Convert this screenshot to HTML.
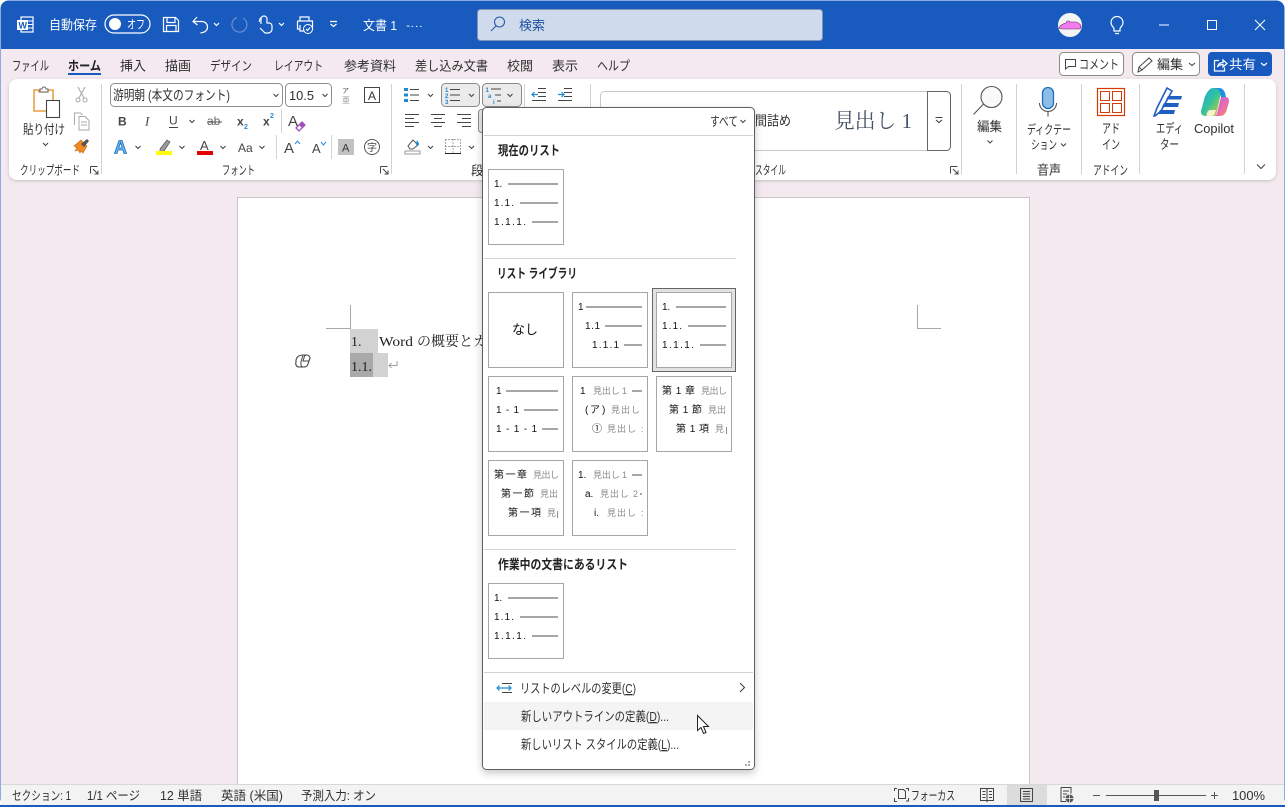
<!DOCTYPE html>
<html lang="ja"><head><meta charset="utf-8"><title>文書 1 - Word</title>
<style>
html,body{margin:0;padding:0;width:1285px;height:807px;overflow:hidden;background:#fff}
svg{display:block;position:absolute;left:0;top:0}
text{font-family:"Liberation Sans","Noto Sans CJK JP",sans-serif;font-size:13px;fill:#303030;white-space:pre}
.w{fill:#fff}
.s{font-size:12.5px}
.b{font-weight:700;fill:#222}
.tn{font-size:10px;fill:#111}
.tg{font-size:9px;fill:#8a8a8a}
.ser{font-family:"Liberation Serif","Noto Serif CJK JP",serif;font-size:14px;fill:#222}
.c{fill:none;stroke:#444;stroke-width:1.1}
.i{fill:none;stroke:#444;stroke-width:1}
.iw{fill:none;stroke:#fff;stroke-width:1.2}
.sep{stroke:#d2d2d2;stroke-width:1}
.l{stroke:#a6a6a6;stroke-width:2}
.tile{fill:#fff;stroke:#a6a6a6;stroke-width:1}
</style></head><body>
<svg width="1285" height="807" viewBox="0 0 1285 807" xmlns="http://www.w3.org/2000/svg">
<defs>
<filter id="sh" x="-10%" y="-10%" width="120%" height="120%"><feDropShadow dx="0" dy="3" stdDeviation="4" flood-color="#000" flood-opacity=".22"/></filter>
<filter id="sh2" x="-2%" y="-10%" width="104%" height="120%"><feDropShadow dx="0" dy="1" stdDeviation="1.5" flood-color="#000" flood-opacity=".18"/></filter>
<linearGradient id="cp1" x1="0" y1="0" x2="1" y2="1"><stop offset="0" stop-color="#1fa4e8"/><stop offset=".5" stop-color="#35c39a"/><stop offset="1" stop-color="#f5c518"/></linearGradient>
<linearGradient id="cp2" x1="0" y1="0" x2="1" y2="1"><stop offset="0" stop-color="#b05fe0"/><stop offset=".6" stop-color="#e86db0"/><stop offset="1" stop-color="#f59a3c"/></linearGradient>
</defs>

<!-- window -->
<rect x="0.5" y="0.5" width="1284" height="806" rx="8" fill="#185abd"/>
<rect x="1" y="49" width="1283" height="736" fill="#f3e9ef"/>

<!-- title bar -->
<g>
<rect x="21" y="17" width="12" height="15" fill="none" stroke="#fff" stroke-width="1.2"/>
<path d="M26 21h7M26 24.500h7M26 28h7" stroke="#fff"/>
<rect x="17" y="20" width="11" height="10" fill="#fff"/>
<text x="18.500" y="28.500" style="font-size:9px;font-weight:700;fill:#185abd">W</text>
<text class="w" x="49" y="29.500" textLength="48" lengthAdjust="spacingAndGlyphs">自動保存</text>
<rect x="105" y="15" width="45" height="18" rx="9" fill="none" stroke="#fff" stroke-width="1.2"/>
<circle cx="115" cy="24" r="6" fill="#fff"/>
<text class="w" x="127" y="28.500" textLength="18" lengthAdjust="spacingAndGlyphs" style="font-size:12px">オフ</text>
<path class="iw" d="M163.500 17.500h12l3 3v11h-15zM167 17.500v5h8v-5M166.500 31.500v-6h9.500v6"/>
<path class="iw" d="M197 17l-4 4.500 4.500 3.500M193.500 21.500h8a5.500 5.500 0 0 1 1 11l-2 .5"/>
<path d="M214 23l2.500 2.500 2.500-2.500" class="iw"/>
<path d="M243 18a7.500 7.500 0 1 1-6-.5" fill="none" stroke="#6a8fd0" stroke-width="1.2"/>
<path class="iw" d="M261 24v-5a3 3 0 0 1 6 0v4h2a3 3 0 0 1 3 3v3a4 4 0 0 1-4 4h-3l-5-5M262 17a5 5 0 0 0-2.500 5"/>
<path d="M279 23l2.500 2.500 2.500-2.500" class="iw"/>
<path class="iw" d="M300 21v-4h9v4M297.500 21h15v8h-3M300.500 29h-3v-8M300 25v6h5"/>
<circle cx="308" cy="29" r="4.500" fill="#185abd" stroke="#fff"/>
<path d="M306 29l1.500 1.500 2.500-3" class="iw"/>
<path class="iw" d="M330 21.500h7M330.500 24l3 2.500 3-2.500"/>
<text class="w" x="363" y="30" textLength="34" lengthAdjust="spacingAndGlyphs">文書 1</text>
<text class="w" x="406" y="29" textLength="17" lengthAdjust="spacingAndGlyphs" style="font-size:10px">-···</text>
<rect x="477.500" y="9.500" width="345" height="31" rx="3" fill="#cfdbec" stroke="#8196b6"/>
<circle cx="499.500" cy="22" r="5" fill="none" stroke="#2a5aa8" stroke-width="1.100"/>
<path d="M496 26l-5 5" stroke="#2a5aa8" stroke-width="1.100"/>
<text x="519" y="30" style="fill:#1e4f9e" textLength="26" lengthAdjust="spacingAndGlyphs">検索</text>
<circle cx="1070" cy="25" r="12" fill="#f4f6f4"/>
<path d="M1059 28c1-3 6-5 7-5l1-2h2l1 1h6c3 1 5 3 5 5l-1 2h-18z" fill="#f07cf0" stroke="#702070" stroke-width=".6"/>
<path class="iw" d="M1114 31v-2.500c-1-2-3-3-3-6a6 6 0 0 1 12 0c0 3-2 4-3 6v2.500zM1115 33.500h4"/>
<path d="M1159 25h10" stroke="#fff"/>
<rect x="1207.500" y="20.500" width="9" height="9" fill="none" stroke="#fff"/>
<path d="M1255 20l10 10M1265 20l-10 10" stroke="#fff"/>
</g>

<!-- tabs -->
<g>
<text x="12" y="70.500" textLength="37" lengthAdjust="spacingAndGlyphs">ファイル</text>
<text x="68" y="70.500" class="b" textLength="33" lengthAdjust="spacingAndGlyphs">ホーム</text>
<rect x="68" y="73" width="33" height="2" fill="#185abd"/>
<text x="120" y="70.500" textLength="26" lengthAdjust="spacingAndGlyphs">挿入</text>
<text x="165" y="70.500" textLength="26" lengthAdjust="spacingAndGlyphs">描画</text>
<text x="210" y="70.500" textLength="42" lengthAdjust="spacingAndGlyphs">デザイン</text>
<text x="274" y="70.500" textLength="49" lengthAdjust="spacingAndGlyphs">レイアウト</text>
<text x="344" y="70.500" textLength="52" lengthAdjust="spacingAndGlyphs">参考資料</text>
<text x="415" y="70.500" textLength="73" lengthAdjust="spacingAndGlyphs">差し込み文書</text>
<text x="507" y="70.500" textLength="26" lengthAdjust="spacingAndGlyphs">校閲</text>
<text x="552" y="70.500" textLength="26" lengthAdjust="spacingAndGlyphs">表示</text>
<text x="597" y="70.500" textLength="33" lengthAdjust="spacingAndGlyphs">ヘルプ</text>

<rect x="1059.500" y="52.500" width="64" height="23" rx="4" fill="#fff" stroke="#8a8a8a"/>
<path class="i" d="M1065.500 59.500h10v7h-7l-3 2.500z"/>
<text x="1079" y="69" textLength="40" lengthAdjust="spacingAndGlyphs">コメント</text>
<rect x="1132.500" y="52.500" width="67" height="23" rx="4" fill="#fff" stroke="#8a8a8a"/>
<path class="i" d="M1138 72l1-5 10-9 3 3-10 9zM1139 67l3 3"/>
<text x="1157" y="69" textLength="26" lengthAdjust="spacingAndGlyphs">編集</text>
<path class="c" d="M1189 63l3 2.500 3-2.500"/>
<rect x="1208" y="52" width="64" height="24" rx="4" fill="#185abd"/>
<path class="iw" d="M1219 60.500h-4.500v10.500h10v-3.500M1217.500 67c.5-3 2.500-4.500 5.500-4.500v-2.500l4 3.500-4 3.500v-2.500c-2.500 0-4 .5-5.500 2.500z"/>
<text class="w" x="1229" y="69" textLength="27" lengthAdjust="spacingAndGlyphs">共有</text>
<path class="iw" d="M1261 63l3 2.500 3-2.500"/>
</g>

<!-- ribbon -->
<rect x="9" y="79" width="1267" height="101" rx="8" fill="#fff" filter="url(#sh2)"/>
<path class="sep" d="M101.500 84v90M391.500 84v90M590.500 84v90M961.500 84v90M1016.500 84v90M1081.500 84v90M1139.500 84v90M1244.500 84v90M524.500 84v24M281.500 109v24M276.500 135v24M331.500 135v24"/>

<!-- clipboard -->
<path d="M34 90h5v2h9v-2h5v21H34z" fill="#fff" stroke="#e08a1e" stroke-width="1.300"/>
<path d="M40 92v-3h2a2 2 0 0 1 4 0h2v3z" fill="#fff" stroke="#666"/>
<rect x="46.500" y="100.500" width="13" height="17" fill="#fff" stroke="#444" stroke-width="1.100"/>
<text x="23" y="134" textLength="42" lengthAdjust="spacingAndGlyphs">貼り付け</text>
<path class="c" d="M43 143l2.500 2.500 2.500-2.500"/>
<path d="M78 87l6 11M85 87l-6 11" stroke="#a8a8a8" stroke-width="1.100"/>
<circle cx="78" cy="100" r="2" fill="none" stroke="#a8a8a8"/><circle cx="85" cy="100" r="2" fill="none" stroke="#a8a8a8"/>
<path d="M74.500 125v-12h6l2 2M79 116.500h6l4 4v9.500H79zM81 122h6M81 125h6" fill="#fff" stroke="#a8a8a8"/>
<path d="M74 146l7-6 6 6-4 7-2-2-1 2-2-3-3 1 2-3z" fill="#f08a24" stroke="#c96a10" stroke-width=".6"/>
<path d="M81 144l6-5 2 2-5 6z" fill="#555"/>
<text x="20" y="174.500" class="s" textLength="60" lengthAdjust="spacingAndGlyphs">クリップボード</text>
<path class="i" d="M90.500 166.500h7M90.500 166.500v7M98 174l-5-5M98 170.500v3.500h-3.500"/>

<!-- font -->
<rect x="110.500" y="83.500" width="172" height="23" rx="4" fill="#fff" stroke="#8f8f8f"/>
<text x="113" y="100" textLength="117" lengthAdjust="spacingAndGlyphs" style="font-size:13.5px">游明朝 (本文のフォント)</text>
<path class="c" d="M273.500 94l2.500 2.500 2.500-2.500"/>
<rect x="285.500" y="83.500" width="46" height="23" rx="4" fill="#fff" stroke="#8f8f8f"/>
<text x="289" y="100" textLength="25" lengthAdjust="spacingAndGlyphs">10.5</text>
<path class="c" d="M322.500 94l2.500 2.500 2.500-2.500"/>
<text x="342" y="93" style="font-size:7px;fill:#555">ア</text>
<text x="342" y="103" style="font-size:8px;fill:#999">亜</text>
<rect x="364.500" y="87.500" width="15" height="15" fill="none" stroke="#444"/>
<text x="368" y="100" style="font-size:12px;fill:#333">A</text>
<text x="118" y="125.500" style="font-size:12px;font-weight:700;fill:#444">B</text>
<text x="145" y="125.500" style="font-family:'Liberation Serif',serif;font-style:italic;font-size:13px;fill:#444">I</text>
<text x="169" y="124.500" style="font-size:12px;fill:#444">U</text>
<path d="M169 127.500h9" stroke="#444"/>
<path class="c" d="M189.500 120l2.500 2.500 2.500-2.500"/>
<text x="207" y="125" style="font-size:12px;fill:#666">ab</text>
<path d="M207 122h15" stroke="#555"/>
<text x="237" y="125.500" style="font-size:12px;font-weight:700;fill:#444">x</text>
<text x="244" y="129" style="font-size:7px;font-weight:700;fill:#2b88d8">2</text>
<text x="263" y="125.500" style="font-size:12px;font-weight:700;fill:#444">x</text>
<text x="270" y="118" style="font-size:7px;font-weight:700;fill:#2b88d8">2</text>
<text x="288" y="126" style="font-size:15px;fill:#444">A</text>
<path d="M296 128l6-6 3 3-6 6z" fill="#fff" stroke="#a04fc0" stroke-width="1.300"/>
<path d="M299 125l3-3 3 3-3 3z" fill="#a04fc0"/>
<text x="114" y="153.500" style="font-size:18px;font-weight:700;fill:#6fb6ee;stroke:#1a6cc0;stroke-width:.8">A</text>
<path class="c" d="M135.500 146l2.500 2.500 2.500-2.500"/>
<path d="M160 149l7-9 3 2-6 9-4 1z" fill="#999" stroke="#555" stroke-width=".7"/>
<rect x="156" y="151" width="16" height="4" fill="#ffff00"/>
<path class="c" d="M179.500 146l2.500 2.500 2.500-2.500"/>
<text x="200" y="150" style="font-size:13px;fill:#444">A</text>
<rect x="197" y="151" width="16" height="4" fill="#e40000"/>
<path class="c" d="M220.500 146l2.500 2.500 2.500-2.500"/>
<text x="238" y="152" style="font-size:12px;fill:#444">Aa</text>
<path class="c" d="M259.500 146l2.500 2.500 2.500-2.500"/>
<text x="284" y="153" style="font-size:15px;fill:#444">A</text>
<path d="M295 144l2.500-3 2.500 3" fill="none" stroke="#2b88d8"/>
<text x="312" y="153" style="font-size:13px;fill:#444">A</text>
<path d="M321 142l2.500 3 2.500-3" fill="none" stroke="#2b88d8"/>
<rect x="338" y="139" width="16" height="16" fill="#c2c2c2"/>
<text x="342" y="151.500" style="font-size:11px;fill:#333">A</text>
<circle cx="372" cy="147" r="7.500" fill="none" stroke="#555"/>
<text x="367" y="151" style="font-size:10px;fill:#444">字</text>
<text x="222" y="174.500" class="s" textLength="33" lengthAdjust="spacingAndGlyphs">フォント</text>
<path class="i" d="M380.500 166.500h7M380.500 166.500v7M388 174l-5-5M388 170.500v3.500h-3.500"/>

<!-- paragraph -->
<path d="M404 88h4v3h-4zM404 93.500h4v3h-4zM404 99h4v3h-4z" fill="#1e88d2"/>
<path d="M410 89.500h9M410 95h9M410 100.500h9" stroke="#444"/>
<path class="c" d="M428 94l2.500 2.500 2.500-2.500"/>
<rect x="441.500" y="83.500" width="38" height="23" rx="4" fill="#ebebeb" stroke="#8a8a8a"/>
<text x="445" y="92" style="font-size:6px;font-weight:700;fill:#1e88d2">1</text>
<text x="445" y="98" style="font-size:6px;font-weight:700;fill:#1e88d2">2</text>
<text x="445" y="104" style="font-size:6px;font-weight:700;fill:#1e88d2">3</text>
<path d="M450 89.500h10M450 95h10M450 100.500h10" stroke="#444"/>
<path class="c" d="M469 94l2.500 2.500 2.500-2.500"/>
<rect x="482.500" y="83.500" width="39" height="23" rx="4" fill="#ebebeb" stroke="#8a8a8a"/>
<text x="485.500" y="92" style="font-size:6px;font-weight:700;fill:#1e88d2">1</text>
<text x="488" y="98" style="font-size:6px;font-weight:700;fill:#1e88d2">a</text>
<text x="493" y="104" style="font-size:6px;font-weight:700;fill:#1e88d2">i</text>
<path d="M491 89h10M495 95h6M497 101h4" stroke="#444"/>
<path class="c" d="M507.500 94l2.500 2.500 2.500-2.500"/>
<path d="M538 88.500h8M538 92.500h8M538 96.500h8M532 100.500h14" stroke="#444"/>
<path d="M538 94.500h-6M534.500 92l-2.500 2.500 2.500 2.500" fill="none" stroke="#1e88d2" stroke-width="1.200"/>
<path d="M564 88.500h8M564 92.500h8M564 96.500h8M558 100.500h14" stroke="#444"/>
<path d="M558 94.500h6M561.500 92l2.500 2.500-2.500 2.500" fill="none" stroke="#1e88d2" stroke-width="1.200"/>
<path d="M405 114.500h14M405 118.500h9M405 122.500h14M405 126.500h9" stroke="#444"/>
<path d="M431 114.500h14M434 118.500h8M431 122.500h14M434 126.500h8" stroke="#444"/>
<path d="M457 114.500h14M462 118.500h9M457 122.500h14M462 126.500h9" stroke="#444"/>
<rect x="478.500" y="109.500" width="10" height="23" rx="3" fill="#ebebeb" stroke="#8a8a8a"/>
<path d="M408 146l5-6 5 5-5 4h-3z" fill="#fff" stroke="#555"/>
<path d="M417 140c1 2 2 3 2 4a1.500 1.500 0 0 1-3 0c0-1 .5-2 1-4z" fill="#1e88d2"/>
<rect x="405" y="151" width="15" height="3" fill="#fff" stroke="#999"/>
<path class="c" d="M428 146l2.500 2.500 2.500-2.500"/>
<path d="M445.500 139.500h15M445.500 139.500v14M460.500 139.500v14M453 139.500v14M445.500 146.500h15" fill="none" stroke="#555" stroke-dasharray="1 2"/>
<path d="M445 153.500h16" stroke="#222"/>
<path class="c" d="M469 146l2.500 2.500 2.500-2.500"/>
<text x="471" y="175" class="s">段</text>

<!-- styles -->
<rect x="600.500" y="91.500" width="350" height="59" rx="4" fill="#fff" stroke="#c8c8c8"/>
<path d="M927.500 91.500h19a4 4 0 0 1 4 4v51a4 4 0 0 1-4 4h-19z" fill="#fff" stroke="#666"/>
<path class="c" d="M935.500 117.500h7M936 120l3 2.500 3-2.500"/>
<text x="755" y="125.500" style="font-size:13.5px" textLength="36" lengthAdjust="spacingAndGlyphs">間詰め</text>
<text x="834" y="128" style="font-family:'Liberation Serif','Noto Serif CJK JP',serif;font-size:21px;fill:#46546a" textLength="78" lengthAdjust="spacingAndGlyphs">見出し 1</text>
<text x="755" y="174.500" class="s" textLength="31" lengthAdjust="spacingAndGlyphs">スタイル</text>
<path class="i" d="M950.500 166.500h7M950.500 166.500v7M958 174l-5-5M958 170.500v3.500h-3.500"/>

<!-- right groups -->
<circle cx="991.500" cy="97" r="10.500" fill="#fafafa" stroke="#555" stroke-width="1.100"/>
<path d="M983.500 104l-10 10.500" stroke="#555" stroke-width="1.100"/>
<text x="977" y="131" textLength="25" lengthAdjust="spacingAndGlyphs">編集</text>
<path class="c" d="M987.500 140.500l2.500 2.500 2.500-2.500"/>
<rect x="1042.500" y="87.500" width="11" height="21" rx="5.500" fill="#8cbee8" stroke="#1e6fbb" stroke-width="1.300"/>
<path d="M1039.500 103a8.500 8.500 0 0 0 17 0M1048 111.500v5" fill="none" stroke="#555" stroke-width="1.100"/>
<text x="1027" y="134" textLength="44" lengthAdjust="spacingAndGlyphs" style="font-size:12.5px">ディクテー</text>
<text x="1031" y="149" textLength="26" lengthAdjust="spacingAndGlyphs" style="font-size:12.5px">ション</text>
<path class="c" d="M1061 143.500l2.500 2.500 2.500-2.500"/>
<text x="1037" y="174.500" textLength="24" lengthAdjust="spacingAndGlyphs">音声</text>
<rect x="1097.500" y="88.500" width="27" height="27" fill="#fff" stroke="#d83b01" stroke-width="1.200"/>
<rect x="1100.500" y="91.500" width="9" height="9" fill="none" stroke="#d83b01"/>
<rect x="1112.500" y="91.500" width="9" height="9" fill="none" stroke="#d83b01"/>
<rect x="1100.500" y="103.500" width="9" height="9" fill="none" stroke="#d83b01"/>
<rect x="1112.500" y="103.500" width="9" height="9" fill="none" stroke="#d83b01"/>
<text x="1102" y="133" textLength="18" lengthAdjust="spacingAndGlyphs">アド</text>
<text x="1102" y="149" textLength="18" lengthAdjust="spacingAndGlyphs">イン</text>
<text x="1093" y="174.500" class="s" textLength="35" lengthAdjust="spacingAndGlyphs">アドイン</text>
<path d="M1154 116l3-8 10-20 5 3-11 20-6 5z" fill="#fff" stroke="#1f5fbf" stroke-width="1.600"/>
<path d="M1168 96h14l-1 3.500h-15zM1164 103h15l-1 4h-16zM1160 110h15l-1 4h-16z" fill="#1f5fbf"/>
<text x="1156" y="133" textLength="27" lengthAdjust="spacingAndGlyphs">エディ</text>
<text x="1160" y="149" textLength="19" lengthAdjust="spacingAndGlyphs">ター</text>
<path d="M1213 88h5c2 0 3 1 3.500 3l-5 22c-.5 2-2 3-4 3h-7c-3 0-5-2-4.500-5l3-11c1-5 5-12 9-12z" fill="url(#cp1)"/>
<path d="M1212 116h8c4 0 6-3 7-7l2-7c.5-3-1-5-3.500-5H1221l-4 16c-.5 2-2 3-5 3z" fill="url(#cp2)"/>
<path d="M1214 88h5c3 0 5 2 6 5l1 4h-5l-1-4c-1-3-3-5-6-5z" fill="#1e90e8"/>
<path d="M1207 116c-1-2 0-3 1-5l2-1h6l-1 3c-.5 2-2 3-4 3z" fill="#f7f0d0"/>
<text x="1194" y="133" textLength="40" lengthAdjust="spacingAndGlyphs">Copilot</text>
<path d="M1257 164.500l4 4 4-4" fill="none" stroke="#444" stroke-width="1.100"/>

<!-- document -->
<rect x="237.500" y="197.500" width="792" height="590" fill="#fff" stroke="#c6c6c6"/>
<path d="M350.500 305v24M326 328.500h24.500M917.500 305v24M917 328.500h24" stroke="#a8a8a8"/>
<rect x="350" y="329" width="28" height="24" fill="#d2d2d2"/>
<rect x="350" y="353" width="23" height="24" fill="#a9a9a9"/>
<rect x="373" y="353" width="15" height="24" fill="#d2d2d2"/>
<text class="ser" x="351" y="346">1.</text>
<text class="ser" x="379" y="346" textLength="34" lengthAdjust="spacingAndGlyphs">Word</text>
<text class="ser" x="417" y="346">の概要とカ</text>
<text class="ser" x="351" y="371">1.1.</text>
<path d="M397 361v4.500h-8M391.500 363l-2.500 2.500 2.500 2.500" fill="none" stroke="#a0a0a0"/>
<path d="M296 360c1-4 4-5 7-5h4c2 0 3 2 3 3l-2 6c-.5 2-2 3-4 3h-5c-2 0-4-2-3-5z" fill="#fff" stroke="#444" stroke-width="1.100"/>
<path d="M303 355l-2 7c-.5 2 0 5 2 5M307 355c-2 0-3 1-3 3l-1 3h6" fill="none" stroke="#444"/>

<!-- status bar -->
<rect x="1" y="785" width="1283" height="20" fill="#f3f3f3"/>
<path d="M1 784.500h1283" stroke="#d8d8d8"/>
<rect x="0" y="805" width="1285" height="2" fill="#185abd"/>
<g>
<text class="s" x="12" y="800" textLength="59" lengthAdjust="spacingAndGlyphs">セクション: 1</text>
<text class="s" x="87" y="800" textLength="53" lengthAdjust="spacingAndGlyphs">1/1 ページ</text>
<text class="s" x="160" y="800" textLength="42" lengthAdjust="spacingAndGlyphs">12 単語</text>
<text class="s" x="221" y="800" textLength="62" lengthAdjust="spacingAndGlyphs">英語 (米国)</text>
<text class="s" x="301" y="800" textLength="75" lengthAdjust="spacingAndGlyphs">予測入力: オン</text>
<path class="i" d="M894.500 791v-2.500h2.500M906 788.500h2.500v2.500M908.500 798v3h-2.500M897 801.500h-2.500V798"/>
<path class="i" d="M898.500 789.500h5l2 2v7h-7z"/>
<text class="s" x="911" y="800" textLength="44" lengthAdjust="spacingAndGlyphs">フォーカス</text>
<path class="i" d="M980.500 788.500h6l.5 1 .5-1h6v12h-6l-.5 1-.5-1h-6zM987 789.500v11M982.500 791.500h3M982.500 794.500h3M982.500 797.500h3M989 791.500h3M989 794.500h3M989 797.500h3"/>
<rect x="1007" y="785" width="40" height="20" fill="#dcdcdc"/>
<path class="i" d="M1020.500 788.500h12v13h-12zM1023 791.500h7M1023 794h7M1023 796.500h7M1023 799h7"/>
<path class="i" d="M1061 787.500h10v6M1066 801.500h-5v-14M1063 791h6M1063 794h4M1063 797h2"/>
<circle cx="1069.500" cy="798.500" r="4" fill="#555"/><path d="M1065.500 798.500h8M1069.500 794.500v8" stroke="#f3f3f3" stroke-width=".7"/>
<path d="M1093 795.500h7M1106 795.500h100M1211 795.500h7M1214.500 792v7" stroke="#555"/>
<rect x="1154" y="790" width="5" height="11" fill="#555"/>
<text class="s" x="1232" y="800" textLength="33" lengthAdjust="spacingAndGlyphs">100%</text>
</g>

<!-- popup -->
<rect x="482.500" y="107.500" width="272" height="662" rx="4" fill="#fff" stroke="#5f5f5f" filter="url(#sh)"/>
<text x="710" y="126" textLength="28" lengthAdjust="spacingAndGlyphs">すべて</text>
<path class="c" d="M740.500 120l2.500 2.500 2.500-2.500"/>
<path class="sep" d="M484 135.500h269M484 258.500h252M484 549.500h252M484 672.500h269"/>
<text class="b" x="498" y="155" textLength="62" lengthAdjust="spacingAndGlyphs">現在のリスト</text>
<text class="b" x="497" y="278" textLength="80" lengthAdjust="spacingAndGlyphs">リスト ライブラリ</text>
<text class="b" x="498" y="569" textLength="130" lengthAdjust="spacingAndGlyphs">作業中の文書にあるリスト</text>

<!-- current list tile -->
<rect class="tile" x="488.500" y="169.500" width="75" height="75"/>
<text class="tn" x="494" y="187">1.</text><path class="l" d="M508 184h50"/>
<text class="tn" x="494" y="206" textLength="20">1.1.</text><path class="l" d="M520 203h38"/>
<text class="tn" x="494" y="225" textLength="32">1.1.1.</text><path class="l" d="M532 222h26"/>

<!-- library row 1 -->
<rect class="tile" x="488.500" y="292.500" width="75" height="75"/>
<text x="512" y="334" textLength="26" lengthAdjust="spacingAndGlyphs" style="fill:#111">なし</text>

<rect class="tile" x="572.500" y="292.500" width="75" height="75"/>
<text class="tn" x="578" y="310">1</text><path class="l" d="M586 307h56"/>
<text class="tn" x="585" y="329" textLength="15">1.1</text><path class="l" d="M605 326h37"/>
<text class="tn" x="592" y="348" textLength="27">1.1.1</text><path class="l" d="M624 345h18"/>

<rect x="652.500" y="288.500" width="83" height="83" fill="#e2e2e2" stroke="#666"/>
<rect class="tile" x="656.500" y="292.500" width="75" height="75"/>
<text class="tn" x="662" y="310">1.</text><path class="l" d="M676 307h50"/>
<text class="tn" x="662" y="329" textLength="20">1.1.</text><path class="l" d="M688 326h38"/>
<text class="tn" x="662" y="348" textLength="32">1.1.1.</text><path class="l" d="M700 345h26"/>

<!-- library row 2 -->
<rect class="tile" x="488.500" y="376.500" width="75" height="75"/>
<text class="tn" x="496" y="394">1</text><path class="l" d="M506 391h52"/>
<text class="tn" x="496" y="413" textLength="23">1 - 1</text><path class="l" d="M524 410h34"/>
<text class="tn" x="496" y="432" textLength="41">1 - 1 - 1</text><path class="l" d="M542 429h16"/>

<rect class="tile" x="572.500" y="376.500" width="75" height="75"/>
<text class="tn" x="580" y="394">1</text><text class="tg" x="593" y="394" textLength="34">見出し 1</text><path class="l" d="M632 391h10"/>
<text class="tn" x="585" y="413">(</text><text class="tn" x="590" y="413">ア</text><text class="tn" x="602" y="413">)</text><text class="tg" x="611" y="413" textLength="29">見出し</text>
<text class="tn" x="592" y="432">①</text><text class="tg" x="607" y="432" textLength="29">見出し</text><text class="tg" x="641" y="432">:</text>

<rect class="tile" x="656.500" y="376.500" width="75" height="75"/>
<text class="tn" x="662" y="394" textLength="33">第 1 章</text><text class="tg" x="701" y="394" textLength="26">見出し</text>
<text class="tn" x="669" y="413" textLength="33">第 1 節</text><text class="tg" x="708" y="413" textLength="18">見出</text>
<text class="tn" x="676" y="432" textLength="33">第 1 項</text><text class="tg" x="715" y="432">見</text><path d="M726.500 427v7" stroke="#8a8a8a"/>

<!-- library row 3 -->
<rect class="tile" x="488.500" y="460.500" width="75" height="75"/>
<text class="tn" x="494" y="478" textLength="33">第一章</text><text class="tg" x="533" y="478" textLength="26">見出し</text>
<text class="tn" x="501" y="497" textLength="33">第一節</text><text class="tg" x="540" y="497" textLength="18">見出</text>
<text class="tn" x="508" y="516" textLength="33">第一項</text><text class="tg" x="547" y="516">見</text><path d="M557.500 511v7" stroke="#8a8a8a"/>

<rect class="tile" x="572.500" y="460.500" width="75" height="75"/>
<text class="tn" x="578" y="478">1.</text><text class="tg" x="593" y="478" textLength="34">見出し 1</text><path class="l" d="M632 475h10"/>
<text class="tn" x="585" y="497">a.</text><text class="tg" x="600" y="497" textLength="38">見出し 2</text><path class="l" d="M640 494h2"/>
<text class="tn" x="594" y="516">i.</text><text class="tg" x="607" y="516" textLength="29">見出し</text><text class="tg" x="641" y="516">:</text>

<!-- active doc tile -->
<rect class="tile" x="488.500" y="583.500" width="75" height="75"/>
<text class="tn" x="494" y="601">1.</text><path class="l" d="M508 598h50"/>
<text class="tn" x="494" y="620" textLength="20">1.1.</text><path class="l" d="M520 617h38"/>
<text class="tn" x="494" y="639" textLength="32">1.1.1.</text><path class="l" d="M532 636h26"/>

<!-- menu -->
<path d="M502 683.500h10M502 692.500h10" stroke="#444"/>
<path d="M497 688h14M499.500 685.500l-2.500 2.500 2.500 2.500M508.500 685.500l2.500 2.500-2.500 2.500" fill="none" stroke="#1e88d2" stroke-width="1.200"/>
<text x="520" y="693" textLength="116" lengthAdjust="spacingAndGlyphs">リストのレベルの変更(<tspan text-decoration="underline">C</tspan>)</text>
<path d="M740 683l4.500 4.500-4.500 4.500" fill="none" stroke="#444" stroke-width="1.100"/>
<rect x="484" y="702" width="269" height="28" fill="#f4f4f4"/>
<text x="521" y="721" textLength="148" lengthAdjust="spacingAndGlyphs">新しいアウトラインの定義(<tspan text-decoration="underline">D</tspan>)...</text>
<text x="521" y="749" textLength="158" lengthAdjust="spacingAndGlyphs">新しいリスト スタイルの定義(<tspan text-decoration="underline">L</tspan>)...</text>
<path d="M745 764h2v2h-2zM748 764h2v2h-2zM748 761h2v2h-2z" fill="#aaa"/>
<!-- cursor -->
<path d="M697.500 715.500v15l3.500-3 2.500 6 2.500-1-2.500-6h5z" fill="#fff" stroke="#222"/>
</svg>
</body></html>
